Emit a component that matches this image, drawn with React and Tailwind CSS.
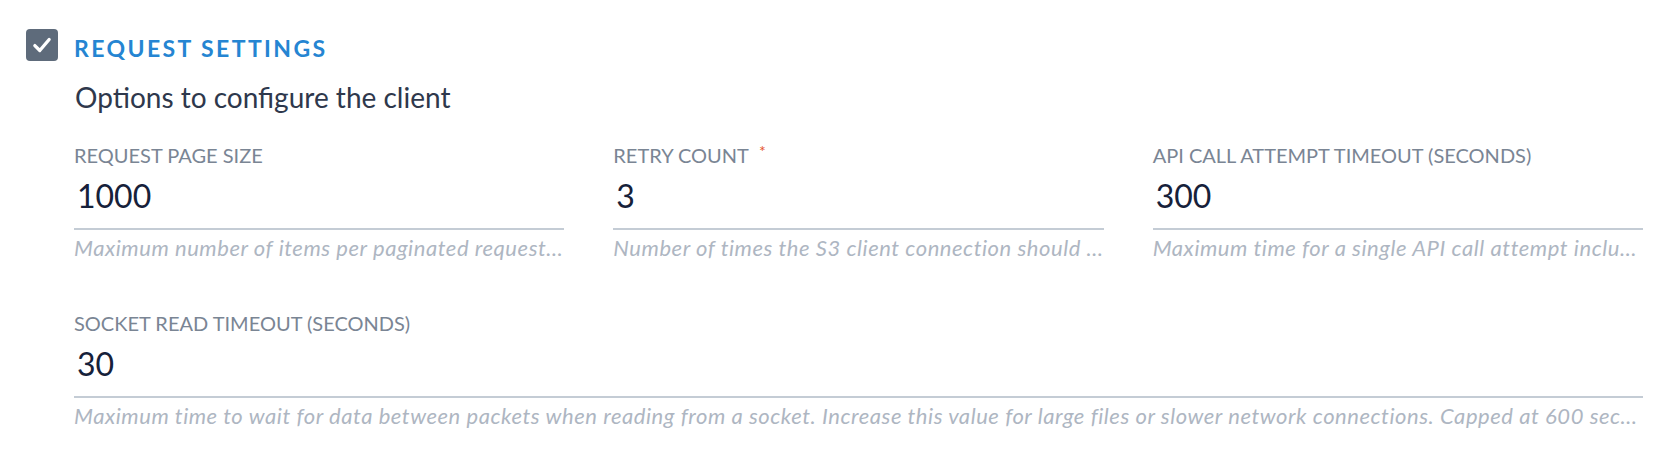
import React from "react";

const fields = [
  {
    label: "REQUEST PAGE SIZE",
    value: "1000",
    hint: "Maximum number of items per paginated request when listing objects from the bucket.",
  },
  {
    label: "RETRY COUNT",
    required: true,
    value: "3",
    hint: "Number of times the S3 client connection should be retried before failing the request.",
  },
  {
    label: "API CALL ATTEMPT TIMEOUT (SECONDS)",
    value: "300",
    hint: "Maximum time for a single API call attempt including retries and network latency.",
  },
];

function Field({ label, value, hint, required }) {
  return (
    <div className="min-w-0">
      <div className="flex items-start text-[20px] leading-[24px] text-[#7a8594]">
        <span>{label}</span>
        {required && (
          <span className="ml-[10px] text-[16px] leading-[15px] text-[#e5532b]">*</span>
        )}
      </div>
      <div className="mt-[9px] border-b-2 border-[#c4ccd5] pb-[12px] pl-[3px] text-[32px] leading-[40px] text-[#16213a]">
        {value}
      </div>
      <div className="mt-[6px] truncate text-[22px] italic leading-[24px] tracking-[0.55px] text-[#aeb6c2]">
        {hint}
      </div>
    </div>
  );
}

export default function App() {
  return (
    <div
      className="min-h-[474px] bg-white pl-[26px] pr-[35px] pt-[29px]"
      style={{ fontFamily: "Lato, 'Open Sans', sans-serif" }}
    >
      <div className="flex items-start gap-[16px]">
        <div className="flex h-[32px] w-[32px] shrink-0 items-center justify-center rounded-[4px] bg-[#5e6b7b]">
          <svg width="22" height="22" viewBox="0 0 20 20" fill="none">
            <path
              d="M3.5 10.5 L8 15 L16.5 5"
              stroke="white"
              strokeWidth="3"
              strokeLinecap="round"
              strokeLinejoin="round"
            />
          </svg>
        </div>
        <div className="min-w-0 flex-1">
          <h2 className="mt-[5px] text-[23px] font-bold leading-[28px] tracking-[2.4px] text-[#2585d2]">
            REQUEST SETTINGS
          </h2>
          <p className="mt-[18px] pl-[1px] text-[28px] leading-[34px] text-[#2e384c]">
            Options to configure the client
          </p>
          <div className="mt-[29px] grid grid-cols-3 gap-x-[49px]">
            {fields.map((f) => (
              <Field key={f.label} {...f} />
            ))}
          </div>
          <div className="mt-[51px]">
            <Field
              label="SOCKET READ TIMEOUT (SECONDS)"
              value="30"
              hint="Maximum time to wait for data between packets when reading from a socket. Increase this value for large files or slower network connections. Capped at 600 seconds to avoid hanging transfers."
            />
          </div>
        </div>
      </div>
    </div>
  );
}
